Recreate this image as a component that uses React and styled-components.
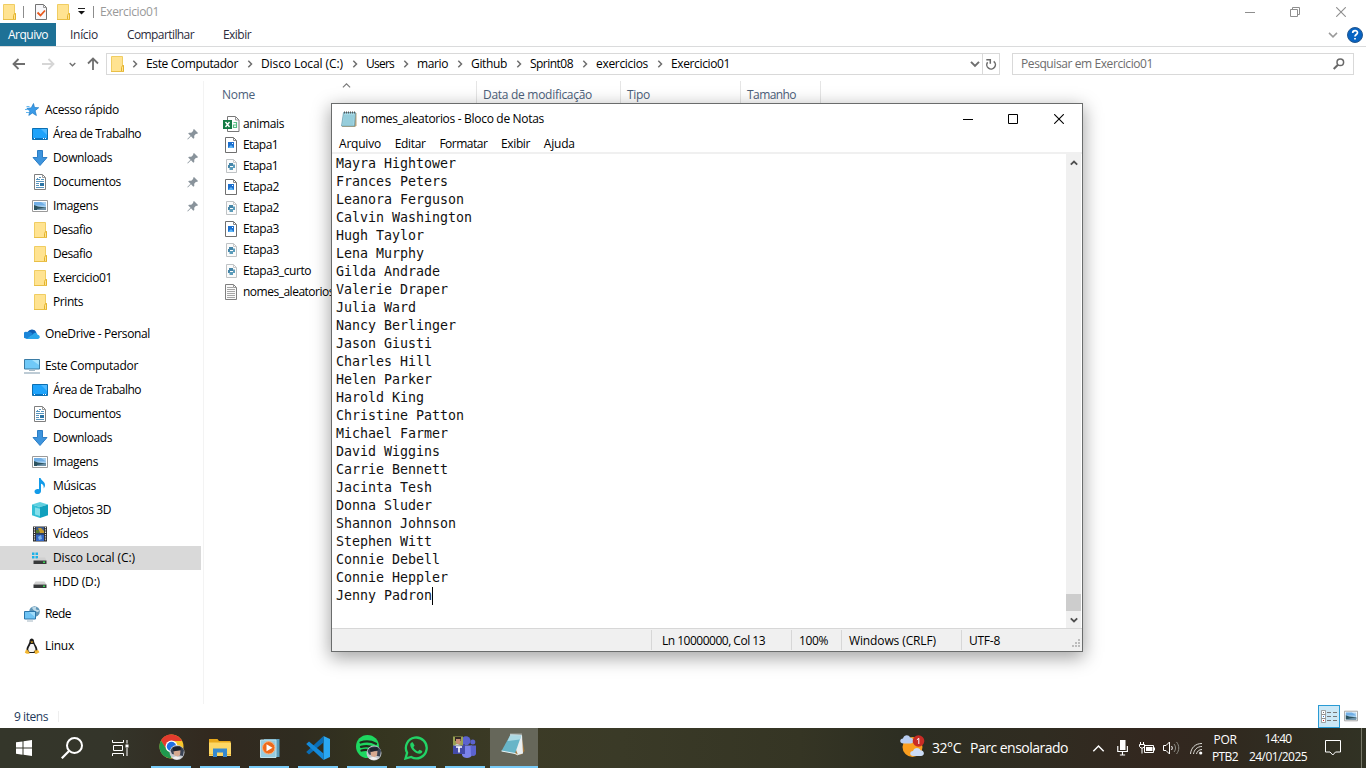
import React, { useLayoutEffect, useRef, useState } from "react";
import styled, { createGlobalStyle, css } from "styled-components";

const Global = createGlobalStyle`
  * { box-sizing: border-box; }
  body { margin: 0; overflow: hidden; background: #fff; }
  svg { display: block; flex: none; }
`;

/* ---------- text ---------- */
const Run = styled.span`
  display: block;
  flex: none;
  white-space: pre;
`;

function Text({ w, children }) {
  const ref = useRef(null);
  const [spacing, setSpacing] = useState(0);
  useLayoutEffect(() => {
    const el = ref.current;
    el.style.letterSpacing = "0px";
    const range = document.createRange();
    range.selectNodeContents(el);
    const natural = range.getBoundingClientRect().width;
    const next = (w - natural) / String(children).length;
    setSpacing(next);
    el.style.letterSpacing = next + "px";
  }, [w, children]);
  return <Run ref={ref} style={{ letterSpacing: spacing + "px" }}>{children}</Run>;
}

/* ---------- layout ---------- */
const Screen = styled.div`
  position: relative;
  width: 1366px;
  height: 768px;
  display: flex;
  flex-direction: column;
  overflow: hidden;
  background: #fff;
  color: #000;
  font: 12px/16px "Open Sans", "Noto Sans", sans-serif;
  font-stretch: 91%;
`;
const TitleBar = styled.header`
  height: 23px;
  flex: none;
  display: flex;
  align-items: center;
  color: #999;
  padding-left: 2px;
`;
const Slot = styled.div`
  flex: none;
  width: ${(p) => p.$w}px;
  display: flex;
  justify-content: ${(p) => p.$align || "center"};
  align-items: center;
`;
const Spacer = styled.div`flex: 1;`;
const VLine = styled.div`
  width: 1px;
  height: ${(p) => p.$h || 12}px;
  background: ${(p) => p.$c || "#8c8c8c"};
  flex: none;
`;
const Ribbon = styled.nav`
  height: 24px;
  flex: none;
  display: flex;
  border-bottom: 1px solid #dadbdc;
  color: #2b2b3c;
`;
const FileTab = styled.div`
  width: 56px;
  padding: 4px 0 0 8px;
  background: #1e7196;
  color: #fff;
`;
const Tab = styled.div`
  padding: 4px 0 0 ${(p) => p.$pl}px;
`;
const RibbonEnd = styled.div`
  margin-left: auto;
  display: flex;
  align-items: center;
  gap: 9px;
  padding-right: 3px;
`;
const AddressRow = styled.div`
  height: 34px;
  flex: none;
  display: flex;
  padding-top: 6px;
`;
const NavButtons = styled.div`
  width: 106px;
  height: 22px;
  display: flex;
  align-items: center;
  padding-left: 12px;
`;
const AddressBox = styled.div`
  width: 894px;
  height: 22px;
  border: 1px solid #d9d9d9;
  display: flex;
  align-items: center;
  padding-left: 3px;
`;
const SearchBox = styled.div`
  width: 342px;
  height: 22px;
  margin-left: 12px;
  border: 1px solid #d9d9d9;
  display: flex;
  align-items: center;
  justify-content: space-between;
  padding: 0 8px 0 8px;
  color: #6d6d6d;
`;
const Body = styled.div`
  flex: 1;
  display: flex;
  min-height: 0;
`;
const Sidebar = styled.aside`
  width: 204px;
  height: 623px;
  border-right: 1px solid #f3f3f3;
  padding-top: 17px;
`;
const TreeRow = styled.div`
  height: 24px;
  width: 201px;
  display: flex;
  align-items: center;
  padding-left: ${(p) => (p.$root ? 24 : 32)}px;
  margin-bottom: ${(p) => (p.$gap ? 8 : 0)}px;
  gap: 5px;
  background: ${(p) => (p.$selected ? "#d9d9d9" : "transparent")};
  & > svg:last-child:not(:first-child) { margin-left: auto; margin-right: 2px; }
`;
const Main = styled.main`flex: 1;`;
const Columns = styled.div`
  height: 26px;
  display: flex;
  color: #4c607a;
`;
const Column = styled.div`
  width: ${(p) => p.$w}px;
  height: 22px;
  padding: 6px 0 0 ${(p) => p.$pl}px;
  border-right: 1px solid #e5e5e5;
  display: flex;
`;
const SortMark = styled.div`margin: -6px 0 0 87px;`;
const FileRow = styled.div`
  height: 21px;
  display: flex;
  align-items: center;
  gap: 4px;
  padding-left: 19px;
`;
const Files = styled.div`padding-top: 6px;`;
const StatusBar = styled.footer`
  height: 24px;
  flex: none;
  display: flex;
  align-items: center;
  color: #1e395b;
  padding: 1px 0 0 14px;
`;
const ViewButton = styled.div`
  width: 22px;
  height: 23px;
  display: flex;
  align-items: center;
  justify-content: center;
  background: #cce8f6;
  border: 1px solid #2a9bd4;
`;
const ViewPlain = styled.div`padding: 0 8px 2px 4px;`;

/* ---------- notepad ---------- */
const Window = styled.section`
  position: absolute;
  left: 331px;
  top: 103px;
  width: 752px;
  height: 549px;
  border: 1px solid #6a6c6c;
  background: #fff;
  display: flex;
  flex-direction: column;
  box-shadow: 0 5px 17px 1px rgba(0, 0, 0, 0.36);
`;
const WinTitle = styled.div`
  height: 30px;
  flex: none;
  display: flex;
  align-items: center;
  padding: 0 0 1px 9px;
`;
const WinMenu = styled.div`
  height: 18px;
  flex: none;
  display: flex;
  gap: 13.700px;
  padding: 2px 0 0 7px;
`;
const WinBody = styled.div`
  flex: 1;
  min-height: 0;
  display: flex;
  border-top: 2px solid #f0f0f0;
`;
const Lines = styled.div`
  flex: 1;
  font: 13.3px/18px "DejaVu Sans Mono", monospace;
  color: #111;
  padding: 1px 0 0 4px;
`;
const Line = styled.div`
  height: 18px;
  display: flex;
  align-items: center;
`;
const Caret = styled.i`
  width: 1px;
  height: 18px;
  background: #000;
`;
const Scroll = styled.div`
  width: 15px;
  margin-right: 1px;
  background: #f0f0f0;
  display: flex;
  flex-direction: column;
  align-items: center;
  justify-content: space-between;
  padding: 5px 0 4px;
`;
const Thumb = styled.div`
  width: 15px;
  height: 17px;
  margin: auto 0 5px;
  background: #cdcdcd;
`;
const WinStatus = styled.div`
  height: 23px;
  flex: none;
  border-top: 1px solid #d7d7d7;
  background: #f0f0f0;
  display: flex;
  padding-top: 1px;
`;
const StatusCell = styled.div`
  width: ${(p) => p.$w}px;
  height: 20px;
  border-left: ${(p) => (p.$first ? 0 : 1)}px solid #d7d7d7;
  padding: 3px 0 0 ${(p) => p.$pl || 7}px;
`;
const Grip = styled.div`margin: 9px 1px 0 auto;`;

/* ---------- taskbar ---------- */
const Taskbar = styled.footer`
  height: 40px;
  flex: none;
  display: flex;
  color: #fff;
  background: linear-gradient(90deg, #34362a 0, #34352a 110px, #32291f 210px, #2f2c20 300px, #34341f 370px, #3c3b26 520px, #3a3a27 620px, #353524 800px, #2d2e22 900px, #302c21 1040px, #33271f 1160px, #30291f 1230px, #313224 1366px);
`;
const Task = styled.div`
  width: ${(p) => p.$w || 49}px;
  height: 40px;
  display: flex;
  justify-content: center;
  align-items: center;
  ${(p) => p.$open && css`
    width: 40px;
    margin-right: 9px;
    border-bottom: 2px solid #78cbf8;
    padding: 1px 0 0 ${p.$shift || 0}px;
  `}
  ${(p) => p.$active && css`
    width: 48px;
    margin: 0 0 0 -4px;
    background: #66675a;
    padding: 0 2px 4px 0;
  `}
`;
const Weather = styled.div`
  display: flex;
  align-items: center;
  gap: 9px;
  font-size: 14px;
  & > svg { margin: -2px -3px 0 0; }
`;
const TwoLines = styled.div`
  width: ${(p) => p.$w}px;
  display: flex;
  flex-direction: column;
  align-items: center;
  gap: ${(p) => p.$gap}px;
  padding-top: ${(p) => p.$top}px;
`;

/* ---------- icons ---------- */
const Svg = ({ w = 16, h = 16, box, children, ...rest }) => (
  <svg width={w} height={h} viewBox={box || `0 0 ${w} ${h}`} {...rest}>{children}</svg>
);
const Folder = () => (
  <Svg>
    <path d="M2.500.5h11v9h1v6h-12z" fill="#ffe391" stroke="#f0cd62" />
    <path d="M12.500 15.500v-4l1-2h1v6z" fill="#ffe391" stroke="#e3b32d" />
    <path d="M2 15.500h12.500" stroke="#e9bf46" />
  </Svg>
);
const CheckDoc = () => (
  <Svg>
    <path d="M2.500.5h8l3 3v12h-11z" fill="#f7f7fa" stroke="#737373" />
    <path d="M10.500.5v3h3" fill="none" stroke="#999" />
    <path d="M4.500 8.500l3 3 4.500-5" fill="none" stroke="#e8581c" strokeWidth="1.800" />
  </Svg>
);
const Chevron = ({ d = "down", c = "#6e6e6e", s = 8, sw = 1.500 }) => {
  const r = { down: 0, up: 180, right: -90 }[d];
  return (
    <Svg w={s} h={s} box="0 0 8 8">
      <path d="M.8 2.300L4 5.500 7.200 2.300" fill="none" stroke={c} strokeWidth={sw} transform={`rotate(${r} 4 4)`} />
    </Svg>
  );
};
const Arrow = ({ c, r = 0 }) => (
  <Svg w={14} h={14}>
    <g transform={`rotate(${r} 7 7)`} fill="none" stroke={c} strokeWidth="1.800">
      <path d="M1.500 7H13M6.500 2L1.500 7l5 5" />
    </g>
  </Svg>
);
const Star = () => (
  <Svg>
    <path d="M9.500 1.500l1 4 4.200.2-3.600 3 1.300 4.800-4-2.500-3.600 2.400 1.100-4.300L2.800 6.300l4.400-.4z" fill="#3a9be8" stroke="#1c7ac4" strokeWidth=".7" />
    <path d="M2.500 4.500h3M1 7.500h3M2 10.500h3" stroke="#66b7ef" />
  </Svg>
);
const Desktop = () => (
  <Svg>
    <path d="M.5 2.500h15v11H.5z" fill="#1ea3fb" stroke="#0b6fb2" />
    <path d="M9 3h6v6z" fill="#4db9ff" />
    <path d="M1 12.500h14" stroke="#0873c2" />
    <path d="M2 12.500h1M11 12.500h1M13 12.500h1" stroke="#fff" />
  </Svg>
);
const Download = () => (
  <Svg><path d="M5.500.5h5v7h4.500l-7 8-7-8h4.500z" fill="#3d94dd" stroke="#2c7dc5" /></Svg>
);
const Document = () => (
  <Svg>
    <path d="M2.500.5h8l3 3v12h-11z" fill="#fff" stroke="#7f7f7f" />
    <path d="M10.500.5v3h3" fill="none" stroke="#999" />
    <path d="M5 4.500h1M7 3.500h2M4 5.500h4M9 5.500h3M4 7.500h8M4 9.500h3M8 9.500h4M4 11.500h3M4 13.500h8" stroke="#5794bd" />
    <path d="M8 9h4v3H8z" fill="#2d75a5" />
  </Svg>
);
const Picture = ({ w = 16 }) => (
  <Svg w={w} h={w} box="0 0 16 16">
    <path d="M.5 2.500h15v11H.5z" fill="#fff" stroke="#9a9a9a" />
    <path d="M2 4h12v8H2z" fill="#a9d3f3" />
    <path d="M2 4h7l5 3.500H2z" fill="#5b9fe0" opacity=".7" />
    <path d="M2 7l4 1.500 8 1V12H2z" fill="#2c5360" />
    <path d="M5 11l9-1.500V12H5z" fill="#6d91a8" />
  </Svg>
);
const Pin = () => (
  <Svg w={12} h={12}>
    <path d="M7 1l4 4-1 1-1-.2L7.200 7.800 7.300 10l-1 .8-2.300-2.500L.8 11.500l-.5-.5 3.200-3.200L1.200 5.600 2 4.700l2.300.1 2-2L6 2z" fill="#89939b" />
  </Svg>
);
const Cloud = () => (
  <Svg>
    <path d="M3.500 6A5 5 0 0112.500 6.500L8 10 1 8z" fill="#0f5fb4" />
    <path d="M1 12.200A3.300 3.300 0 013.500 6c1.500-.5 3.500 0 5 1.500L5 13H3z" fill="#1a85d8" />
    <path d="M2.500 13l6-4.500c2-2.500 5-2 5 .3 3 .4 3 4.200.2 4.200z" fill="#2aa6ea" />
  </Svg>
);
const Computer = () => (
  <Svg>
    <path d="M.5 1.500h15v9.500H.5z" fill="#70c9f8" stroke="#3b7ca5" />
    <path d="M8 2h7v5z" fill="#a5e2fd" />
    <path d="M5 12.500h6" stroke="#a8bac6" />
    <path d="M0 15h16" stroke="#7d98ab" />
  </Svg>
);
const Music = () => (
  <Svg>
    <path d="M7 0h1.600c.6 3 4.400 3.500 4.400 7 0 1.500-.6 2.700-1.500 3.500.9-3-1-4.300-2.500-4.700v7.200c0 4-6.500 4-6.500.5 0-2 2.500-3 4.500-2.200z" fill="#129be9" />
  </Svg>
);
const Cube = () => (
  <Svg>
    <path d="M0 2.500L8 0l8 2.500L8 5z" fill="#5fd0e0" />
    <path d="M0 2.500L8 5v11l-8-2.700z" fill="#33bfd5" />
    <path d="M16 2.500L8 5v11l8-2.700z" fill="#10a0bd" />
    <path d="M3 5.500l5 1.300V14l-5-1.600z" fill="#a6edf4" opacity=".7" />
  </Svg>
);
const Film = () => (
  <Svg>
    <path d="M1 .5h14v15H1z" fill="#2b2b2b" />
    <path d="M2.500 1v14M13.500 1v14" stroke="#e8e8e8" strokeWidth="1.200" strokeDasharray="1.300 1" />
    <path d="M4 1h8v6.500H4z" fill="#3c5a8c" /><path d="M4 8.500h8V15H4z" fill="#3265c4" />
    <path d="M6 2h3l3 3v2H8z" fill="#c79a2b" /><path d="M4 4h3v3H4z" fill="#557a2c" />
    <path d="M6 11l3-2 1 4-3 1z" fill="#7eb4e8" />
  </Svg>
);
const Disk = ({ win }) => (
  <Svg>
    {win && <path d="M0 2.500h2.500v2.500H0zM3.500 2.500H6v2.500H3.500zM0 6h2.500v2.500H0zM3.500 6H6v2.500H3.500z" fill="#1cb1e8" />}
    <path d={win ? "M7 7.500h6l1.500 3H3z" : "M3.500 7.500h9l2 3H1.500z"} fill="#d0d0d0" />
    <path d="M1.500 10.500h13V14h-13z" fill="#37393a" />
    <path d="M11 12.300h2" stroke="#39d353" strokeWidth="1.400" />
  </Svg>
);
const Network = () => (
  <Svg>
    <circle cx="10.500" cy="5.500" r="5.300" fill="#5f95b7" />
    <path d="M8 1.500c2 0 3-.7 4-.3s-1 1.500 0 2.300 3 0 3 1-1 2-3 1-4-2.500-4-4z" fill="#c1dbe8" />
    <path d="M.5 5.500h11v7.500H.5z" fill="#6ec3f4" stroke="#2c77ab" />
    <path d="M5 6h6v5z" fill="#a2dcfa" />
    <path d="M3 15h6" stroke="#a4b6c2" />
  </Svg>
);
const Tux = () => (
  <Svg>
    <path d="M5.500 3C5.500-.5 10-.5 10 3c0 3 3.500 5 3.500 9.500L11 15H5l-2.500-3C2.500 8 5.500 6 5.500 3z" fill="#1b1b1b" />
    <path d="M6.500 6h3c1 2.500 2 4 2 6L9.500 14h-4l-1.300-2C4.200 9.500 6 8 6.500 6z" fill="#f4f4f4" />
    <path d="M6.300 3.600h3L8 5.200z" fill="#f2ae1c" />
    <path d="M2 11.500c1.500 0 3 2 3.800 3.700C4 16.500 2 15.500.8 14.800zM10.500 12c2 1 3 0 3.200-.5l1.800 2.800c-1.500.5-3 2.300-4.700 1.300z" fill="#f2b632" />
  </Svg>
);
const Excel = () => (
  <Svg w={17} h={16}>
    <path d="M4.500.5h8l3.500 3.500v11.500H4.500z" fill="#fff" stroke="#777" />
    <path d="M12.500.5V4H16" fill="none" stroke="#999" />
    <path d="M0 4h9v9H0z" fill="#137b44" />
    <path d="M2.500 6l4 5M6.500 6l-4 5" stroke="#fff" strokeWidth="1.400" />
    <path d="M10.500 6.500h3v5h-3v-2.500h3" fill="none" stroke="#55bd83" strokeWidth="1.200" />
  </Svg>
);
const ImageFile = () => (
  <Svg>
    <path d="M2.500.5h8l3 3v12h-11z" fill="#fff" stroke="#6f6f6f" />
    <path d="M10.500.5v3h3" fill="none" stroke="#888" />
    <path d="M5 5h6v6H5z" fill="#1c6fce" /><path d="M5 11l3-3 3 3z" fill="#5cb4f3" /><path d="M9 6h1v1H9z" fill="#fff" />
  </Svg>
);
const PyFile = () => (
  <Svg>
    <path d="M3.500 1.500h7l3 3v10h-10z" fill="#fbfbfb" stroke="#bfc3c5" />
    <path d="M10.500 1.500v3h3" fill="none" stroke="#c9c9c9" />
    <path d="M6 5h4v3H7v2H5V7h1z" fill="#4585a8" />
    <path d="M10 6.500h2V10h-2v2H6.500V9H10z" fill="#5c9cba" />
  </Svg>
);
const TextFile = () => (
  <Svg>
    <path d="M2.500.5h8l3 3v12h-11z" fill="#fafafa" stroke="#7f7f7f" />
    <path d="M10.500.5v3h3" fill="none" stroke="#999" />
    <path d="M4 3.500h6M4 5.500h8M4 7.500h8M4 9.500h8M4 11.500h8M4 13.500h8" stroke="#a6a6a6" />
  </Svg>
);
const NotepadSmall = () => (
  <Svg>
    <path d="M3 2h12.500v12.500L14 16H1z" fill="#b9a27a" />
    <path d="M2.500 1.500H14.500L13.500 15H.5z" fill="#a4d7e4" stroke="#5f97a8" strokeWidth=".7" />
    <path d="M3 5h10M2.700 7h10M2.500 9h10M2.200 11h10M2 13h10" stroke="#74b5c8" strokeWidth=".6" />
    <path d="M3 1.500h11" stroke="#555" strokeWidth="2" strokeDasharray="1 1" />
  </Svg>
);
const Minimize = ({ c }) => <Svg w={10} h={10}><path d="M0 5.500h10" stroke={c} /></Svg>;
const Close = ({ c, s = 10 }) => (
  <Svg w={s} h={s} box="0 0 10 10"><path d="M.2.2l9.600 9.600M9.800.2L.2 9.800" stroke={c} strokeWidth="1.100" /></Svg>
);
const Restore = () => (
  <Svg w={10} h={10}><path d="M.5 2.500h7v7h-7zM2.500 2V.5h7v7H8" fill="none" stroke="#8e8e8e" /></Svg>
);
const Help = () => (
  <Svg>
    <circle cx="8" cy="8" r="7.500" fill="#0763c2" stroke="#23578f" />
    <path d="M5.700 6c0-3.200 4.800-3 4.800-.3C10.500 7.500 8 7.500 8 9.600M8 10.900v1.700" fill="none" stroke="#fff" strokeWidth="1.700" />
  </Svg>
);
const Refresh = () => (
  <Svg w={12} h={12}>
    <path d="M8.700 3.300A4.300 4.300 0 112.600 4.200M1.300 1.700h4v4" fill="none" stroke="#6b6b6b" strokeWidth="1.500" />
  </Svg>
);
const SearchGlass = () => (
  <Svg w={12} h={12}><circle cx="7.300" cy="4.200" r="3.300" fill="none" stroke="#686868" strokeWidth="1.500" /><path d="M5 6.800L.7 11" stroke="#686868" strokeWidth="2" /></Svg>
);

/* taskbar icons */
const WinLogo = () => (
  <Svg><path d="M0 2.300L6.500 1.400V7.500H0zM7.500 1.200L16 0v7.500H7.500zM0 8.500h6.500v6.200L0 13.800zM7.500 8.500H16V16l-8.500-1.200z" fill="#fff" /></Svg>
);
const BigSearch = () => (
  <Svg w={22} h={22}><circle cx="13.500" cy="8.500" r="7.500" fill="none" stroke="#fff" strokeWidth="2" /><path d="M8 14L.8 21.300" stroke="#fff" strokeWidth="2.200" /></Svg>
);
const TaskView = () => (
  <Svg w={17} h={16}>
    <path d="M.5 0v2.500h11V0M1.500 5.500h9v5h-9zM.5 16v-2.500h11V16M15 0v3.500M15 8v8" fill="none" stroke="#fff" />
    <path d="M13.500 4.500h3v3h-3z" fill="#fff" />
  </Svg>
);
const Face = ({ x, y }) => (
  <g transform={`translate(${x} ${y})`}>
    <circle cx="7.500" cy="7.500" r="7.500" fill="#c5c9cf" />
    <path d="M1 5.500A7.500 7.500 0 0114.500 5l-1 6-11-2z" fill="#3a4354" />
    <path d="M4 6l7-.5-.5 4.500-3 2-3-2z" fill="#d6a990" />
    <path d="M3 2.500l7.500-1 1.500 3-8 2z" fill="#1d222d" />
    <path d="M2.500 12.700l4-1.500 5 1.500a7.500 7.500 0 01-9 0z" fill="#f0eeee" />
  </g>
);
const Chrome = () => (
  <Svg w={26} h={27}>
    <circle cx="12.500" cy="12.500" r="12" fill="#f9c72c" />
    <path d="M2 6.500a12 12 0 0121 .5H12.500L7 15.500z" fill="#e33b2e" />
    <path d="M2 6.500a12 12 0 009.500 18l5-9-9 0z" fill="#20994e" />
    <circle cx="12.500" cy="12.500" r="6" fill="#fff" /><circle cx="12.500" cy="12.500" r="4.700" fill="#1f6fe5" />
    <Face x={10.500} y={11} />
  </Svg>
);
const Explorer = () => (
  <Svg w={22} h={20}>
    <path d="M0 1h8.500l1.500 2h11.500v15H0z" fill="#e8a81b" />
    <path d="M0 4.500h22V18H0z" fill="#fdd765" />
    <path d="M4 19v-8.500h14V19h-4v-4.500H8V19z" fill="#3689cf" />
    <path d="M0 16.500h4M18 16.500h4" stroke="#edb73a" />
  </Svg>
);
const Player = () => (
  <Svg w={20} h={20}>
    <path d="M4 1h15.500v18H4z" fill="#5a9dba" /><path d="M.5 2h15.500v17.500H.5z" fill="#97cce0" stroke="#c0e2ec" />
    <circle cx="8.700" cy="9.800" r="6.200" fill="#ee6a1a" stroke="#f9b27e" /><path d="M6.500 6.300l6 3.500-6 3.500z" fill="#fff" />
  </Svg>
);
const Code = () => (
  <Svg w={24} h={24}>
    <path d="M17.500 0L24 3v18l-6.500 3z" fill="#2aa8f2" />
    <path d="M17.500 0v6.500L3 18.500.2 16z" fill="#0a6db5" />
    <path d="M17.500 24v-6.500L3 5.500.2 8z" fill="#148ada" />
  </Svg>
);
const Spotify = () => (
  <Svg w={26} h={27}>
    <circle cx="11.500" cy="12.500" r="11.500" fill="#1ed760" />
    <path d="M4.500 8.500c5-1.700 11-1.200 15.500 1.200M5 12.800c4.500-1.200 9.500-.8 13 1.200M5.500 16.500c4-1 8-.5 11 1" fill="none" stroke="#202a1b" strokeWidth="2.300" strokeLinecap="round" />
    <Face x={10.500} y={11.500} />
  </Svg>
);
const WhatsApp = () => (
  <Svg w={24} h={24}>
    <path d="M1.500 22.500l1.600-5.700A10.400 10.400 0 117.200 21z" fill="none" stroke="#22d366" strokeWidth="2.300" />
    <path d="M8.700 6.300c-.5-.5-2.700.5-2.500 2.700.4 4 5 8.700 9.300 8.700 1.700 0 3-1.200 2.700-2.700L15.400 13.700l-1.500 1.700c-2-.8-3.500-2.200-4.500-4.200l1.200-1.600z" fill="#22d366" />
  </Svg>
);
const Teams = () => (
  <Svg w={24} h={24}>
    <circle cx="13" cy="4.800" r="4.500" fill="#5b63cf" /><circle cx="19.800" cy="6" r="2.500" fill="#5b63cf" />
    <path d="M9 9.500h10v9.500c-1 4-9 4-10 0z" fill="#7b83eb" />
    <path d="M17.500 9.500H23v8.500c-.7 2.300-3.500 2.500-5 1z" fill="#5b63cf" />
    <path d="M0 8h12v10H0z" fill="#434aa8" />
    <path d="M3 11h6M6 11v5.500" stroke="#fff" strokeWidth="1.600" />
    <path d="M0 .5h10v9H0z" fill="#9aa353" /><path d="M2 1h6v4H2z" fill="#332826" /><path d="M3 3h4.500v4l-2 1.500L3 7z" fill="#c98d74" /><path d="M1 9.500l3-1.500 4 1.500z" fill="#d7dbe5" />
  </Svg>
);
const NotepadBig = () => (
  <Svg w={25} h={24}>
    <path d="M20 2l3.500 16-3 3.500h-7z" fill="#a97b3f" />
    <path d="M9 1.500L21 2l1 18.500-5 1.500z" fill="#e8eef0" />
    <path d="M9.500 1.500L20.500 2 14 20.500.5 18z" fill="#68b5c8" />
    <path d="M9.500 1.500L20.500 2l-1.600 4.500L6.500 8z" fill="#c8e8ef" opacity=".7" />
    <path d="M.5 18L14 20.500l3 1.500" fill="none" stroke="#e9f5f7" />
    <path d="M9.500 1.500h11" stroke="#d5dadb" strokeWidth="2" strokeDasharray="1 1" />
  </Svg>
);
const Sunny = () => (
  <Svg w={26} h={24}>
    <circle cx="12.500" cy="12" r="10" fill="#fa9e1f" />
    <path d="M3.500 8.500C-1 8.500-.5 3.500 3 3.500 4-.5 9-.5 10 2.500c4 0 4.500 6 .5 6z" fill="#b9cdf1" />
    <path d="M13.500 21c-4.500 0-4-5-.5-5 1-4 6.500-4 7.500-.7 4.500.2 4.500 5.700.5 5.700z" fill="#cbdcf6" />
    <circle cx="18.500" cy="6" r="5.800" fill="#c82b25" />
    <path d="M16.900 4.800l1.900-1.500V9" fill="none" stroke="#fff" />
  </Svg>
);
const Mic = () => (
  <Svg w={11} h={16}><path d="M3 0h5.500v10H3z" fill="#fff" /><path d="M.8 6v5.500h10V6M5.700 11.500v3.500M3 15h5.500" fill="none" stroke="#fff" strokeWidth="1.200" transform="scale(.96 1)" /></Svg>
);
const Battery = () => (
  <Svg w={16} h={13}>
    <path d="M5.500 3.500h9v7h-9z" fill="none" stroke="#fff" /><path d="M7 5h6.500v4H7zM15 5.500h1v3h-1z" fill="#fff" />
    <path d="M1.500 0v2M4.500 0v2M.5 2.500h5v2L4 6H2L.5 4.500zM3 6v5.500" fill="none" stroke="#fff" />
  </Svg>
);
const Sound = () => (
  <Svg w={17} h={14}>
    <path d="M.5 4.500h2.500L6.500 1v12L3 9.500H.5z" fill="none" stroke="#fff" />
    <path d="M8.500 5c1 1.300 1 2.700 0 4" fill="none" stroke="#fff" />
    <path d="M11 3c2 2.500 2 5.500 0 8M13.500 1c3 3.500 3 8.500 0 12" fill="none" stroke="#8c8c85" />
  </Svg>
);
const Wifi = () => (
  <Svg w={13} h={13}>
    <path d="M.5 12C1 6 5 1.500 12 1.500M3.500 12C4 8 7 4.500 12 4.500M6.500 12c.5-2.500 2.500-4.500 5.500-4.500" fill="none" stroke="#ddddd8" />
    <circle cx="10.700" cy="11" r="1.600" fill="#fff" />
  </Svg>
);
const Message = () => (
  <Svg w={16} h={16}><path d="M.5.5h15v11.500h-5L7.800 15 5 12H.5z" fill="none" stroke="#fff" /></Svg>
);

/* ---------- data ---------- */
const tree = [
  ["Acesso rápido", 74, Star, { root: true }],
  ["Área de Trabalho", 88, Desktop, { pin: true }],
  ["Downloads", 59, Download, { pin: true }],
  ["Documentos", 68, Document, { pin: true }],
  ["Imagens", 45, Picture, { pin: true }],
  ["Desafio", 39, Folder, {}],
  ["Desafio", 39, Folder, {}],
  ["Exercicio01", 59, Folder, {}],
  ["Prints", 30, Folder, { gap: true }],
  ["OneDrive - Personal", 105, Cloud, { root: true, gap: true }],
  ["Este Computador", 93, Computer, { root: true }],
  ["Área de Trabalho", 88, Desktop, {}],
  ["Documentos", 68, Document, {}],
  ["Downloads", 59, Download, {}],
  ["Imagens", 45, Picture, {}],
  ["Músicas", 43, Music, {}],
  ["Objetos 3D", 58, Cube, {}],
  ["Vídeos", 35, Film, {}],
  ["Disco Local (C:)", 82, () => <Disk win />, { selected: true }],
  ["HDD (D:)", 47, Disk, { gap: true }],
  ["Rede", 26, Network, { root: true, gap: true }],
  ["Linux", 29, Tux, { root: true }],
];
const files = [
  ["animais", 41, Excel],
  ["Etapa1", 35, ImageFile],
  ["Etapa1", 35, PyFile],
  ["Etapa2", 36, ImageFile],
  ["Etapa2", 36, PyFile],
  ["Etapa3", 36, ImageFile],
  ["Etapa3", 36, PyFile],
  ["Etapa3_curto", 68, PyFile],
  ["nomes_aleatorios", 91, TextFile],
];
const crumbs = [
  ["Este Computador", 92], ["Disco Local (C:)", 82], ["Users", 28], ["mario", 31],
  ["Github", 36], ["Sprint08", 43], ["exercicios", 52], ["Exercicio01", 59],
];
const names = [
  "Mayra Hightower", "Frances Peters", "Leanora Ferguson", "Calvin Washington", "Hugh Taylor",
  "Lena Murphy", "Gilda Andrade", "Valerie Draper", "Julia Ward", "Nancy Berlinger",
  "Jason Giusti", "Charles Hill", "Helen Parker", "Harold King", "Christine Patton",
  "Michael Farmer", "David Wiggins", "Carrie Bennett", "Jacinta Tesh", "Donna Sluder",
  "Shannon Johnson", "Stephen Witt", "Connie Debell", "Connie Heppler", "Jenny Padron",
];

function Notepad() {
  return (
    <Window>
      <WinTitle>
        <NotepadSmall />
        <Slot $w={4} />
        <Text w={183}>nomes_aleatorios - Bloco de Notas</Text>
        <Spacer />
        <Slot $w={45}><Minimize c="#000" /></Slot>
        <Slot $w={45}><Svg w={10} h={10}><path d="M.5.5h9v9h-9z" fill="none" stroke="#000" /></Svg></Slot>
        <Slot $w={47}><Close c="#000" /></Slot>
      </WinTitle>
      <WinMenu>
        <Text w={42}>Arquivo</Text><Text w={31}>Editar</Text><Text w={48}>Formatar</Text>
        <Text w={29}>Exibir</Text><Text w={31}>Ajuda</Text>
      </WinMenu>
      <WinBody>
        <Lines>
          {names.map((n, i) => (
            <Line key={n}>
              <Text w={n.length * 8}>{n}</Text>
              {i === names.length - 1 && <Caret />}
            </Line>
          ))}
        </Lines>
        <Scroll>
          <Chevron d="up" c="#505050" sw={1.800} />
          <Thumb />
          <Chevron c="#505050" sw={1.800} />
        </Scroll>
      </WinBody>
      <WinStatus>
        <StatusCell $w={319} $first />
        <StatusCell $w={140} $pl={10}><Text w={103}>Ln 10000000, Col 13</Text></StatusCell>
        <StatusCell $w={50}><Text w={29}>100%</Text></StatusCell>
        <StatusCell $w={120}><Text w={87}>Windows (CRLF)</Text></StatusCell>
        <StatusCell $w={100}><Text w={31}>UTF-8</Text></StatusCell>
        <Grip>
          <Svg w={9} h={9}><path d="M6 0h2v2H6zM3 3h2v2H3zM6 3h2v2H6zM0 6h2v2H0zM3 6h2v2H3zM6 6h2v2H6z" fill="#bdbdbd" /></Svg>
        </Grip>
      </WinStatus>
    </Window>
  );
}

export default function App() {
  return (
    <>
      <Global />
      <Screen>
        <TitleBar>
          <Slot $w={13}><Folder /></Slot>
          <Slot $w={16}><VLine /></Slot>
          <Slot $w={19}><CheckDoc /></Slot>
          <Slot $w={26}><Folder /></Slot>
          <Slot $w={11}>
            <Svg w={7} h={7}><path d="M0 .5h7" stroke="#222" /><path d="M0 3h7L3.500 6.500z" fill="#111" /></Svg>
          </Slot>
          <Slot $w={13}><VLine /></Slot>
          <Text w={59}>Exercicio01</Text>
          <Spacer />
          <Slot $w={45}><Minimize c="#8e8e8e" /></Slot>
          <Slot $w={45}><Restore /></Slot>
          <Slot $w={48}><Close c="#8e8e8e" /></Slot>
          <Slot $w={1} />
        </TitleBar>
        <Ribbon>
          <FileTab><Text w={40}>Arquivo</Text></FileTab>
          <Tab $pl={14}><Text w={28}>Início</Text></Tab>
          <Tab $pl={29}><Text w={67}>Compartilhar</Text></Tab>
          <Tab $pl={29}><Text w={28}>Exibir</Text></Tab>
          <RibbonEnd><Chevron c="#9a9a9a" s={10} sw={1.200} /><Help /></RibbonEnd>
        </Ribbon>
        <AddressRow>
          <NavButtons>
            <Slot $w={14}><Arrow c="#6f6f6f" /></Slot>
            <Slot $w={44}><Arrow c="#d6d6d6" r={180} /></Slot>
            <Slot $w={4}><Chevron s={7} /></Slot>
            <Slot $w={38}><Arrow c="#6f6f6f" r={90} /></Slot>
          </NavButtons>
          <AddressBox>
            <Slot $w={14}><Folder /></Slot>
            <Slot $w={22}><Chevron d="right" /></Slot>
            {crumbs.map(([t, w], i) => (
              <React.Fragment key={t}>
                {i > 0 && <Slot $w={23}><Chevron d="right" /></Slot>}
                <Text w={w}>{t}</Text>
              </React.Fragment>
            ))}
            <Spacer />
            <Slot $w={15}><Chevron s={10} sw={1.600} /></Slot>
            <VLine $h={20} $c="#d9d9d9" />
            <Slot $w={16}><Refresh /></Slot>
          </AddressBox>
          <SearchBox><Text w={132}>Pesquisar em Exercicio01</Text><SearchGlass /></SearchBox>
        </AddressRow>
        <Body>
          <Sidebar>
            {tree.map(([t, w, Icon, o], i) => (
              <TreeRow key={i} $root={o.root} $gap={o.gap} $selected={o.selected}>
                <Icon />
                <Text w={w}>{t}</Text>
                {o.pin && <Pin />}
              </TreeRow>
            ))}
          </Sidebar>
          <Main>
            <Columns>
              <Column $w={273} $pl={18}>
                <Text w={33}>Nome</Text>
                <SortMark><Chevron d="up" c="#777" s={9} sw={1} /></SortMark>
              </Column>
              <Column $w={144} $pl={6}><Text w={109}>Data de modificação</Text></Column>
              <Column $w={120} $pl={6}><Text w={23}>Tipo</Text></Column>
              <Column $w={80} $pl={6}><Text w={49}>Tamanho</Text></Column>
            </Columns>
            <Files>
              {files.map(([t, w, Icon], i) => (
                <FileRow key={i}><Slot $w={16}><Icon /></Slot><Text w={w}>{t}</Text></FileRow>
              ))}
            </Files>
          </Main>
        </Body>
        <StatusBar>
          <Text w={34}>9 itens</Text>
          <Slot $w={21}><VLine $h={11} $c="#eee" /></Slot>
          <Spacer />
          <ViewButton>
            <Svg w={16} h={14}>
              <path d="M.5.5h4v4h-4zM.5 4.500h4v4h-4zM.5 8.500h4v4h-4z" fill="#fff" stroke="#8b8b8b" strokeWidth=".8" />
              <path d="M6 2.500h4M12 2.500h4M6 6.500h4M12 6.500h4M6 10.500h4M12 10.500h4" stroke="#777" />
              <path d="M2 2h1v1H2z" fill="#777" /><path d="M2 6h1v1H2z" fill="#2a78d0" /><path d="M2 10h1v1H2z" fill="#c22" />
            </Svg>
          </ViewButton>
          <ViewPlain><Picture w={14} /></ViewPlain>
        </StatusBar>
        <Taskbar>
          <Task $w={48}><WinLogo /></Task>
          <Task $w={48}><BigSearch /></Task>
          <Task $w={55}><Slot $w={48} $align="flex-start"><Slot $w={42}><TaskView /></Slot></Slot></Task>
          <Task $open $shift={2}><Chrome /></Task>
          <Task $open><Explorer /></Task>
          <Task $open $shift={1}><Player /></Task>
          <Task $open><Code /></Task>
          <Task $open $shift={3}><Spotify /></Task>
          <Task $open><WhatsApp /></Task>
          <Task $open><Teams /></Task>
          <Task $open $active><NotepadBig /></Task>
          <Spacer />
          <Weather><Sunny /><Text w={29}>32°C</Text><Text w={98}>Parc ensolarado</Text></Weather>
          <Slot $w={21} />
          <Slot $w={19}><Chevron d="up" c="#fff" s={13} sw={.9} /></Slot>
          <Slot $w={28}><Mic /></Slot>
          <Slot $w={22}><Battery /></Slot>
          <Slot $w={26}><Sound /></Slot>
          <Slot $w={25}><Wifi /></Slot>
          <TwoLines $w={32} $top={4} $gap={1}><Text w={23}>POR</Text><Text w={26}>PTB2</Text></TwoLines>
          <TwoLines $w={74} $top={3} $gap={2}><Text w={27}>14:40</Text><Text w={58}>24/01/2025</Text></TwoLines>
          <Slot $w={36}><Message /></Slot>
          <Slot $w={10} />
          <VLine $h={40} $c="#777869" />
          <Slot $w={4} />
        </Taskbar>
        <Notepad />
      </Screen>
    </>
  );
}
